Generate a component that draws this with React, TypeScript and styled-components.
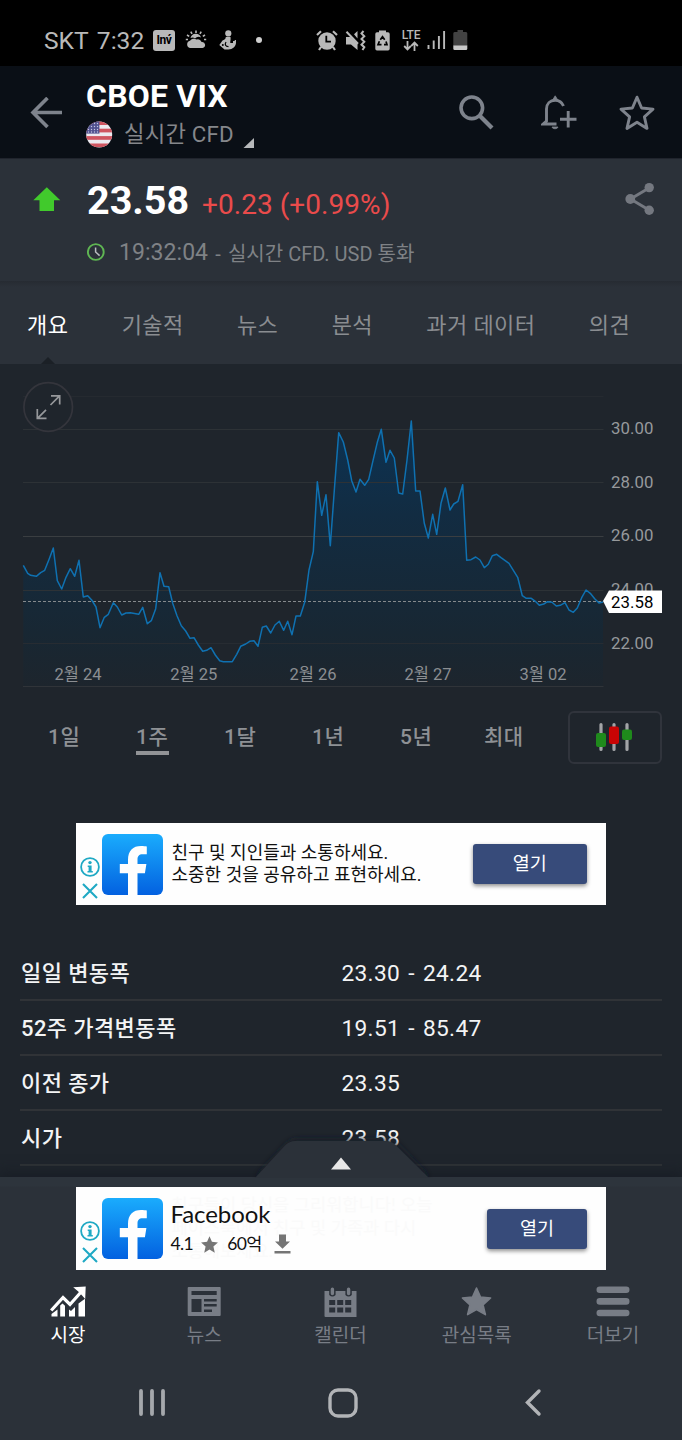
import React from 'react';
import styled, { createGlobalStyle } from 'styled-components';

const GlobalStyle = createGlobalStyle`
  * { box-sizing: border-box; }
  body {
    margin: 0;
    background: #1f252c;
    font-family: Roboto, 'Noto Sans CJK KR', sans-serif;
  }
  svg { display: block; flex: none; }
`;

const Phone = styled.div`
  width: 682px;
  height: 1440px;
  display: flex;
  flex-direction: column;
  overflow: hidden;
  background: #1f252c;
`;

/* ---------- status bar ---------- */

const StatusBar = styled.div`
  height: 66px;
  flex: none;
  display: flex;
  align-items: center;
  padding: 14px 0 0 44px;
  background: #000;
  color: #b9b9b9;
`;

const Carrier = styled.span`
  width: 109px;
  padding-top: 1px;
  font-size: 24.6px;
  line-height: 30px;
  word-spacing: 2.5px;
  white-space: nowrap;
`;

const StatusSlot = styled.span<{ $w: number; $gap?: number }>`
  width: ${(p) => p.$w}px;
  margin-left: ${(p) => p.$gap ?? 0}px;
  flex: none;
`;

const InvBadge = styled.span`
  width: 22px;
  height: 21px;
  flex: none;
  border-radius: 3px;
  background: #b9b9b9;
  color: #000;
  font: 700 12px/21px Roboto, sans-serif;
  letter-spacing: -0.4px;
  text-align: center;
`;

const Lte = styled.span`
  display: flex;
  flex-direction: column;
  align-items: center;
  width: 20px;
  margin-left: 11px;
  font: 500 12px/12px Roboto, sans-serif;
  letter-spacing: -0.2px;
`;

/* ---------- title bar ---------- */

const TitleBar = styled.header`
  height: 93px;
  flex: none;
  display: flex;
  padding-left: 30px;
  background: #0a0f16;
  border-bottom: 1px solid #20242d;
`;

const BackSlot = styled.div`
  width: 56px;
  padding-top: 31px;
`;

const TitleBlock = styled.div`
  width: 372px;
`;

const Title = styled.h1`
  margin: 11px 0 0;
  font-size: 32px;
  line-height: 38px;
  font-weight: 700;
  letter-spacing: 0.2px;
  color: #fff;
`;

const Subtitle = styled.div`
  display: flex;
  align-items: center;
  height: 27px;
  margin-top: 6px;
  font-size: 22.3px;
  line-height: 27px;
  color: #85878b;

  span { margin: 0 9px 0 11px; letter-spacing: 0.2px; white-space: nowrap; }
  svg:last-child { margin-top: 17px; }
`;

const Actions = styled.div`
  display: flex;
  gap: 45px;
  padding-top: 29px;

  svg:nth-child(1) { margin-right: 1px; }
  svg:nth-child(2) { margin-left: 1px; margin-right: -3px; }
`;

/* ---------- quote ---------- */

const Quote = styled.section`
  height: 122px;
  flex: none;
  display: flex;
  background: #2b3139;
`;

const Direction = styled.div`
  width: 87px;
  padding: 28px 0 0 33px;
`;

const QuoteBody = styled.div`
  flex: 1;
  padding-top: 19px;
`;

const PriceLine = styled.div`
  display: flex;
  align-items: baseline;
  height: 46px;
`;

const Price = styled.span`
  width: 115px;
  font-size: 39.5px;
  line-height: 46px;
  font-weight: 700;
  color: #fff;
`;

const Change = styled.span`
  font-size: 28px;
  line-height: 46px;
  letter-spacing: 0.05px;
  color: #ea4b4b;
  white-space: nowrap;
`;

const MetaLine = styled.div`
  display: flex;
  align-items: center;
  height: 30px;
  margin-top: 14px;
  color: #7f8286;
  font-size: 20px;
  line-height: 30px;
  white-space: pre;

  svg { margin-top: -2px; }
  b { margin-left: 14px; font-size: 23px; font-weight: 400; letter-spacing: 0.05px; }
  i { font-style: normal; word-spacing: 2.2px; }
  span { margin-top: 2px; }
`;

const ShareSlot = styled.div`
  width: 57px;
  padding-top: 23px;
`;

/* ---------- tabs ---------- */

const Tabs = styled.nav`
  height: 83px;
  flex: none;
  display: flex;
  padding-left: 27px;
  gap: 53.4px;
  background: linear-gradient(#262b32, #2b3139 6px);
`;

const Tab = styled.div<{ $active?: boolean }>`
  display: flex;
  flex-direction: column;
  align-items: center;
  height: 83px;
  padding-top: 5px;
  font-size: 22px;
  line-height: 80px;
  white-space: nowrap;
  color: ${(p) => (p.$active ? '#fff' : '#8a8d91')};
  letter-spacing: 0.4px;

  svg { margin-top: -9px; }
`;

/* ---------- chart ---------- */

const Main = styled.main`
  height: 813px;
  flex: none;
  overflow: hidden;
`;

const RangeRow = styled.div`
  height: 90px;
  display: flex;
  padding-left: 48px;
  margin-bottom: 42.5px;
`;

const Range = styled.div<{ $w: number; $active?: boolean }>`
  width: ${(p) => p.$w}px;
  flex: none;
  padding-top: 32px;
  font-size: 21px;
  line-height: 31px;
  font-weight: 500;
  color: #8e9195;
  letter-spacing: 0.5px;

  span {
    display: inline-block;
    height: 33px;
    padding-right: 1px;
    border-bottom: ${(p) => (p.$active ? '4px solid #919396' : '0')};
  }
`;

const ChartTypeButton = styled.div`
  width: 94px;
  height: 53px;
  margin: 20.5px 0 0;
  display: flex;
  align-items: center;
  justify-content: center;
  border: 2px solid #30343c;
  border-radius: 6px;
`;

/* ---------- ads ---------- */

const Ad = styled.div`
  width: 530px;
  height: 82.5px;
  margin: 0 auto;
  display: flex;
  background: #fefefe;
  color: #111;
`;

const AdMarks = styled.div`
  width: 26px;
  display: flex;
  flex-direction: column;
  align-items: center;
  gap: 5px;
  padding: 34px 0 0 2px;
`;

const AdLogo = styled.div`
  width: 61px;
  margin: 11px 8.5px 0 0;
`;

const AdCopy = styled.div`
  flex: 1;
  padding-top: 19px;
  font-size: 18px;
  line-height: 22.5px;
  white-space: nowrap;
`;

const AdApp = styled.div`
  flex: 1;
  position: relative;
  font-family: Lato, 'Noto Sans CJK KR', sans-serif;
  padding-top: 12px;
`;

const AppDetails = styled.div`
  position: relative;
  margin-left: -1px;
`;

const AppName = styled.div`
  font-size: 24px;
  line-height: 30px;
  letter-spacing: -0.1px;
`;

const AppStats = styled.div`
  display: flex;
  align-items: center;
  margin-top: 2px;
  height: 26px;
  font-size: 17.5px;
  line-height: 26px;
  letter-spacing: -0.6px;
  white-space: nowrap;

  svg:nth-of-type(1) { margin: 0 8px 0 7px; }
  svg:nth-of-type(2) { margin-left: 12px; }
`;

const Ghost = styled.div`
  position: absolute;
  left: 0;
  top: 6px;
  font-size: 17.6px;
  line-height: 23px;
  color: #fafafa;
  white-space: nowrap;
`;

const AdButton = styled.div<{ $w: number }>`
  width: ${(p) => p.$w}px;
  height: 40px;
  margin: 21.5px 19px 0 0;
  border-radius: 3px;
  background: #374b7a;
  box-shadow: 0 2px 4px rgba(0, 0, 0, 0.45);
  color: #fff;
  font-size: 18.5px;
  line-height: 40px;
  text-align: center;
`;

/* ---------- table ---------- */

const Table = styled.div`
  margin: 41px 20px 0;
`;

const Row = styled.div`
  height: 55px;
  display: flex;
  align-items: center;
  padding: 2px 0 0 1px;
  border-bottom: 2px solid #303337;
  color: #f3f4f5;
`;

const Label = styled.span`
  width: 320.5px;
  font-size: 22px;
  line-height: 30px;
  font-weight: 500;
  letter-spacing: 0.4px;
`;

const Value = styled.span`
  font-size: 22.7px;
  line-height: 30px;
  letter-spacing: 0.3px;
  word-spacing: 2.3px;
`;

/* ---------- dock ---------- */

const Dock = styled.div`
  position: relative;
  flex: 1;
  background: #2b3139;
  box-shadow: 0 -2px 12px 3px #191e26;
`;

const Handle = styled.div`
  position: absolute;
  left: 245px;
  bottom: 100%;
  width: 193px;
  height: 46px;
`;

const DockAd = styled.div`
  padding-top: 10px;
  background: linear-gradient(#2d343c 9px, #2b3139 10px);
`;

const BottomNav = styled.nav`
  display: flex;
  height: 80px;
  margin-top: 12.5px;
  padding-right: 1px;
`;

const NavItem = styled.div<{ $active?: boolean }>`
  flex: 1;
  display: flex;
  flex-direction: column;
  align-items: center;
  padding-top: 4px;
  color: ${(p) => (p.$active ? '#fff' : '#787d86')};
  font-size: 19px;
  line-height: 26px;

  span { margin-top: 6px; }
`;

const SystemNav = styled.div`
  display: flex;
  align-items: center;
  height: 29px;
  margin-top: 26px;
  padding-left: 138px;

  svg:nth-child(2) { margin-left: 162px; }
  svg:nth-child(3) { margin-left: 166px; }
`;

/* ---------- chart data ---------- */

// Vertices in thirds of a pixel
const SERIES: [number, number][] = [
  [70, 586], [83, 610], [92, 616], [109, 619], [122, 608], [134, 601], [148, 566], [160, 534],
  [172, 632], [185, 657], [198, 622], [211, 596], [224, 619], [237, 571], [250, 681], [263, 677],
  [275, 690], [288, 711], [300, 773], [313, 742], [325, 733], [340, 698], [352, 711], [365, 735],
  [378, 729], [391, 728], [416, 733], [428, 712], [442, 761], [454, 752], [467, 716], [480, 608],
  [492, 649], [506, 650], [518, 700], [531, 737], [544, 767], [557, 783], [570, 805], [582, 803],
  [595, 825], [608, 844], [620, 841], [633, 833], [646, 855], [659, 872], [670, 875], [697, 875],
  [710, 853], [722, 829], [737, 822], [749, 814], [762, 812], [774, 829], [787, 772], [799, 768],
  [812, 789], [825, 765], [838, 754], [851, 781], [863, 754], [876, 794], [888, 738], [901, 738],
  [914, 697], [927, 600], [940, 545], [952, 335], [965, 436], [978, 374], [991, 527], [1004, 345],
  [1016, 188], [1030, 216], [1043, 270], [1055, 332], [1068, 366], [1080, 328], [1094, 346],
  [1106, 328], [1119, 272], [1132, 217], [1144, 178], [1158, 277], [1170, 241], [1183, 264],
  [1196, 369], [1208, 372], [1221, 270], [1234, 153], [1247, 363], [1260, 363], [1273, 460],
  [1285, 504], [1298, 433], [1310, 493], [1323, 400], [1336, 354], [1350, 420], [1361, 402],
  [1374, 394], [1388, 344], [1400, 571], [1413, 569], [1427, 561], [1440, 570], [1453, 593],
  [1465, 583], [1477, 557], [1490, 553], [1503, 563], [1527, 580], [1553, 622], [1567, 677],
  [1579, 685], [1594, 685], [1606, 694], [1618, 706], [1631, 702], [1643, 695], [1656, 697],
  [1669, 708], [1681, 706], [1695, 698], [1707, 720], [1720, 727], [1732, 714], [1745, 683],
  [1758, 660], [1771, 670], [1784, 686], [1797, 699], [1809, 696],
];
const LINE = SERIES.map(([x, y]) => `${(x / 3).toFixed(1)},${(y / 3 + 6).toFixed(1)}`).join(' ');

const GRID: [number, string][] = [
  [32.5, '#252a30'], [65.5, '#2d3236'], [118.5, '#2d3236'], [172.5, '#3a3e41'],
  [226.5, '#2d3236'], [279.5, '#272c32'], [322.5, '#303439'],
];
const Y_LABELS: [number, string][] = [
  [70, '30.00'], [123.7, '28.00'], [177.3, '26.00'], [231, '24.00'], [284.7, '22.00'],
];
const X_LABELS: [number, string][] = [
  [78, '2월 24'], [193.7, '2월 25'], [313, '2월 26'], [428, '2월 27'], [543, '3월 02'],
];

function Chart() {
  return (
    <svg width="682" height="326" viewBox="0 0 682 326" fontFamily="Roboto, 'Noto Sans CJK KR', sans-serif">
      <defs>
        <linearGradient id="area" x1="0" y1="0" x2="0" y2="1">
          <stop offset="0" stopColor="#0c3354" />
          <stop offset="0.35" stopColor="#122c42" />
          <stop offset="0.8" stopColor="#182733" />
          <stop offset="1" stopColor="#1d252d" />
        </linearGradient>
      </defs>
      <polygon points={`23.3,322 ${LINE} 603,322`} fill="url(#area)" />
      {GRID.map(([y, c]) => (
        <line key={y} x1="23" x2="603.5" y1={y} y2={y} stroke={c} />
      ))}
      <line x1="23" x2="603" y1="237.5" y2="237.5" stroke="#85898c" strokeDasharray="3 2" />
      <polyline points={LINE} fill="none" stroke="#0f71b1" strokeWidth="1.5" strokeLinejoin="round" />
      <g fill="#96999c" fontSize="16.8">
        {Y_LABELS.map(([y, t]) => (
          <text key={t} x="611" y={y} textLength="42.5">{t}</text>
        ))}
      </g>
      <g fill="#8b8e92" fontSize="16.5" textAnchor="middle">
        {X_LABELS.map(([x, t]) => (
          <text key={t} x={x} y="316.3">{t}</text>
        ))}
      </g>
      <path d="M603 237 L609 226.5 H662 V249 H609 Z" fill="#fff" />
      <text x="611" y="244.3" fontSize="16.8" fill="#000" textLength="42.5">23.58</text>
      <circle cx="48.2" cy="43" r="24.3" fill="#1f252c" stroke="#34353c" strokeWidth="1.7" />
      <path d="M50.5 41 L59.3 32.2 M51 31.8 H59.7 V40.5 M46 45.8 L37.5 54.3 M37.3 45 V54.4 H46.5"
        fill="none" stroke="#96989b" strokeWidth="1.7" />
    </svg>
  );
}

/* ---------- icons ---------- */

const STAR = 'M18 2.2 L22.6 13 L34 14.1 L25.4 21.9 L28 33.4 L18 27.3 L8 33.4 L10.6 21.9 L2 14.1 L13.4 13 Z';

const UsFlag = () => (
  <svg width="27" height="27" viewBox="0 0 27 27">
    <clipPath id="disc"><circle cx="13.2" cy="13.5" r="13" /></clipPath>
    <g clipPath="url(#disc)">
      <rect width="27" height="27" fill="#eceaf0" />
      {[0, 1, 2, 3].map((i) => (
        <rect key={i} y={0.3 + i * 7.4} width="27" height="3.7" fill="#cf5560" />
      ))}
      <rect width="13.4" height="12.6" fill="#51528f" />
      {[2.5, 5.5, 8.5, 11].map((y) =>
        [2.5, 5.5, 8.5, 11.5].map((x) => <circle key={`${x}-${y}`} cx={x} cy={y} r="0.7" fill="#c5c6e2" />)
      )}
    </g>
  </svg>
);

const Facebook = ({ id }: { id: string }) => (
  <svg width="61" height="61" viewBox="0 0 61 61">
    <linearGradient id={id} x1="0" y1="0" x2="0" y2="1">
      <stop offset="0" stopColor="#1aacfd" />
      <stop offset="1" stopColor="#0361e0" />
    </linearGradient>
    <rect width="61" height="61" rx="6" fill={`url(#${id})`} />
    <path d="M26 61 V39.2 H17.8 V30 H26 V26 C26 16.6 31 12 39 12 C41.5 12 43.5 12.2 44.8 12.5 V20.3 H40.8 C36.8 20.3 35.5 22.3 35.5 25.5 V30 H44.4 L42.9 39.2 H35.5 V61 Z" fill="#fefefe" />
  </svg>
);

const Marks = () => (
  <AdMarks>
    <svg width="20" height="20" viewBox="0 0 20 20">
      <circle cx="10" cy="10" r="8.9" fill="none" stroke="#1fa9c4" strokeWidth="1.8" />
      <circle cx="10" cy="5.6" r="1.7" fill="#1fa9c4" />
      <path d="M7.7 8.4 H11.6 V14 H12.8 V15.5 H7.5 V14 H8.6 V10 H7.7 Z" fill="#1fa9c4" />
    </svg>
    <svg width="18" height="18" viewBox="0 0 18 18">
      <path d="M2 2 L16 16 M16 2 L2 16" stroke="#1fa9c4" strokeWidth="2.1" />
    </svg>
  </AdMarks>
);

function StatusIcons() {
  const c = '#b9b9b9';
  return (
    <>
      <InvBadge>Inv́</InvBadge>
      <StatusSlot $w={22} $gap={10}>
        <svg width="22" height="20" viewBox="0 0 22 20">
          <path d="M5.5 8 A5.5 5.5 0 0 1 16 7.5 A5 5 0 0 0 10 8.5 A4 4 0 0 0 5.5 8Z" fill={c} />
          <path d="M11 0.5 V3 M5.8 1.6 L7 3.8 M16.2 1.6 L15 3.8 M2 5 L4.2 6.4 M20 5 L17.8 6.4 M0.8 9.5 H3 M19 9.5 H21.2" stroke={c} strokeWidth="1.6" />
          <path d="M5 18 A3.7 3.7 0 0 1 5 10.8 A4.5 4.5 0 0 1 11.5 9.6 A4.3 4.3 0 0 1 16.6 12 A3 3 0 0 1 17.5 18Z" fill={c} />
        </svg>
      </StatusSlot>
      <StatusSlot $w={18} $gap={12}>
        <svg width="18" height="20" viewBox="0 0 18 20">
          <circle cx="9.3" cy="3.4" r="3.1" fill={c} />
          <path d="M6.8 7 H11.5 C12 10 11 11 11.3 13 H14 V11 H15.7 V10 H17 V12.5 C17 16.5 13.5 19.5 9.5 19.5 H5.5 L0.3 15 L3.5 10.6 C5 9.3 6.4 10 6.8 7Z" fill={c} />
          <path d="M7 12 C5.5 14.5 6.5 16.5 9.5 16.6" stroke="#000" strokeWidth="1.2" fill="none" />
          <circle cx="3.8" cy="15" r="1" fill="#000" />
        </svg>
      </StatusSlot>
      <StatusSlot $w={6} $gap={19}>
        <svg width="6" height="6" viewBox="0 0 6 6"><circle cx="3" cy="3" r="3" fill="#d0d0d0" /></svg>
      </StatusSlot>
      <StatusSlot $w={22} $gap={54}>
        <svg width="22" height="21" viewBox="0 0 22 21">
          <circle cx="11" cy="11" r="8.7" fill={c} />
          <path d="M1 5 L5 1.3 M21 5 L17 1.3 M5 17 L3 20 M17 17 L19 20" stroke={c} strokeWidth="2.2" />
          <path d="M10.3 5.8 V11.6 H15" stroke="#000" strokeWidth="1.8" fill="none" />
        </svg>
      </StatusSlot>
      <StatusSlot $w={21} $gap={7}>
        <svg width="21" height="21" viewBox="0 0 21 21">
          <path d="M1 7 H5.5 L12.5 13.5 V20 L6 14.5 H1Z M9 4.2 L12.5 1 V8.4 Z" fill={c} />
          <path d="M1.5 1.8 L13 13.8" stroke={c} strokeWidth="2" />
          <path d="M18.5 1 L16.5 3.4 L19.3 6.2 L16.5 9 L19.3 11.8 L16.5 14.6 L19.3 17.2 L17.5 20" stroke={c} strokeWidth="2" fill="none" />
        </svg>
      </StatusSlot>
      <StatusSlot $w={15} $gap={9}>
        <svg width="15" height="21" viewBox="0 0 15 21">
          <path d="M4 0.5 H11 V2.2 H13 Q14.7 2.2 14.7 4 V18.8 Q14.7 20.5 13 20.5 H2 Q0.3 20.5 0.3 18.8 V4 Q0.3 2.2 2 2.2 H4Z" fill={c} />
          <path d="M5.3 9.8 L7.5 6.7 L9.7 9.8 M11 11.5 L12 14.7 H9 M6.5 14.7 H3 L4.4 11.2" stroke="#000" strokeWidth="1.7" fill="none" />
        </svg>
      </StatusSlot>
      <Lte>
        LTE
        <svg width="16" height="10" viewBox="0 0 16 10">
          <path d="M4.5 0 V8 M1.2 5 L4.5 8.4 L7.8 5 M11.5 10 V2 M8.2 5 L11.5 1.6 L14.8 5" stroke={c} strokeWidth="1.8" fill="none" />
        </svg>
      </Lte>
      <StatusSlot $w={19} $gap={6}>
        <svg width="19" height="20" viewBox="0 0 19 20">
          <path d="M1.5 15 V19 M6.7 10.5 V19 M11.9 6 V19 M17.1 1 V19" stroke={c} strokeWidth="1.9" />
        </svg>
      </StatusSlot>
      <StatusSlot $w={15} $gap={7}>
        <svg width="15" height="21" viewBox="0 0 15 21">
          <path d="M4.5 0 H10 V2 H13 Q14.3 2 14.3 3.5 V16 H0.3 V3.5 Q0.3 2 1.6 2 H4.5Z" fill="#424242" />
          <path d="M0.3 15.5 H14.3 V18.5 Q14.3 20 13 20 H1.6 Q0.3 20 0.3 18.5Z" fill="#c8c8c8" />
        </svg>
      </StatusSlot>
    </>
  );
}

const NAV: { label: string; icon: React.ReactNode }[] = [
  {
    label: '시장',
    icon: (
      <svg width="36" height="31" viewBox="0 0 36 31" fill="#fff">
        <path d="M1.5 30.5 V28 L7.5 23.5 V30.5Z M10.2 30.5 V19.5 L12.5 17.5 L15 19.8 V30.5Z M19 30.5 V23.5 L21 25 L25 21 V30.5Z M28.5 30.5 V17.5 L35 12.8 V30.5Z" />
        <path d="M1.2 24.5 L13 11.5 L20 18.5 L31.5 5.5" fill="none" stroke="#fff" strokeWidth="3.2" />
        <path d="M23.2 1.2 L35.7 0.5 L35.2 13 L31.2 8.5 L28 5.2Z" />
      </svg>
    ),
  },
  {
    label: '뉴스',
    icon: (
      <svg width="34" height="31" viewBox="0 0 34 31">
        <rect x="0.7" y="1" width="33" height="29" rx="1" fill="#787d86" />
        <path d="M4.5 5 H29.7 V9 H4.5Z M4.5 13 H14.5 V26 H4.5Z M17 13 H29.7 V15.5 H17Z M17 18 H29.7 V20.5 H17Z M17 23.5 H25 V26 H17Z" fill="#2b3139" />
      </svg>
    ),
  },
  {
    label: '캘린더',
    icon: (
      <svg width="33" height="31" viewBox="0 0 33 31">
        <path d="M0.5 5 H32.5 V31 H1.5 Q0.5 31 0.5 30Z" fill="#787d86" />
        <path d="M5.2 2 V9 Q8.4 12 11.6 9 V2Z M21.4 2 V9 Q24.6 12 27.8 9 V2Z" fill="#2b3139" />
        <path d="M8.4 3.2 V7.5 M24.6 3.2 V7.5" stroke="#787d86" strokeWidth="3.4" strokeLinecap="round" />
        {[5.2, 13.2, 21.2].map((x) =>
          [14, 21.5].map((y) => <rect key={`${x}-${y}`} x={x} y={y} width="6" height="5" fill="#2b3139" />)
        )}
      </svg>
    ),
  },
  {
    label: '관심목록',
    icon: (
      <svg width="31" height="31" viewBox="0 0 31 31">
        <path d="M15.5 2 L19.5 11 L29.6 12 L22 18.8 L24.4 28.6 L15.5 23.5 L6.6 28.6 L9 18.8 L1.4 12 L11.5 11Z" fill="#787d86" stroke="#787d86" strokeWidth="1.6" strokeLinejoin="round" />
      </svg>
    ),
  },
  {
    label: '더보기',
    icon: (
      <svg width="34" height="31" viewBox="0 0 34 31" stroke="#787d86" strokeWidth="6.6" strokeLinecap="round">
        <path d="M3.8 3.8 H30.2 M3.8 15.4 H30.2 M3.8 27 H30.2" />
      </svg>
    ),
  },
];

const TABS = ['개요', '기술적', '뉴스', '분석', '과거 데이터', '의견'];

const RANGES: [string, number][] = [
  ['1일', 88], ['1주', 88], ['1달', 88], ['1년', 88], ['5년', 84], ['최대', 84],
];

const ROWS: [string, string][] = [
  ['일일 변동폭', '23.30 - 24.24'],
  ['52주 가격변동폭', '19.51 - 85.47'],
  ['이전 종가', '23.35'],
  ['시가', '23.58'],
];

export default function App() {
  return (
    <Phone>
      <GlobalStyle />
      <StatusBar>
        <Carrier>SKT 7:32</Carrier>
        <StatusIcons />
      </StatusBar>

      <TitleBar>
        <BackSlot>
          <svg width="33" height="32" viewBox="0 0 33 32">
            <path d="M32 15.5 H3 M17.5 1 L3 15.5 L17.5 30" fill="none" stroke="#7e838c" strokeWidth="3.6" />
          </svg>
        </BackSlot>
        <TitleBlock>
          <Title>CBOE VIX</Title>
          <Subtitle>
            <UsFlag />
            <span>실시간 CFD</span>
            <svg width="12" height="10" viewBox="0 0 12 10"><path d="M11 0 V10 H0.5Z" fill="#b7b9bb" /></svg>
          </Subtitle>
        </TitleBlock>
        <Actions>
          <svg width="36" height="36" viewBox="0 0 36 36" fill="none" stroke="#7e838c">
            <circle cx="13.8" cy="12.8" r="10.8" strokeWidth="3.6" />
            <path d="M21.5 20.5 L34 33" strokeWidth="4.2" />
          </svg>
          <svg width="36" height="36" viewBox="0 0 36 36" fill="none" stroke="#7e838c">
            <path d="M15.5 29 H2.2 L5.5 26 V14 C5.5 8.8 9 5.3 14.2 5.3 C18.5 5.3 21 7.5 22.5 11 M27.2 16 V32.5 M19 24.3 H35.5" strokeWidth="2.9" />
            <path d="M11.6 5 L14.2 0.8 L16.8 5Z M11 32 H17 C16.5 34.3 11.5 34.3 11 32Z" fill="#7e838c" strokeWidth="0.8" />
          </svg>
          <svg width="36" height="36" viewBox="0 0 36 36">
            <path d={STAR} fill="none" stroke="#7e838c" strokeWidth="2.9" strokeLinejoin="round" />
          </svg>
        </Actions>
      </TitleBar>

      <Quote>
        <Direction>
          <svg width="28" height="25" viewBox="0 0 28 25">
            <path d="M13.8 0.3 L27.3 13.3 H21 V24 H6.5 V13.3 H0.3Z" fill="#41ca2c" />
          </svg>
        </Direction>
        <QuoteBody>
          <PriceLine>
            <Price>23.58</Price>
            <Change>+0.23 (+0.99%)</Change>
          </PriceLine>
          <MetaLine>
            <svg width="18" height="18" viewBox="0 0 18 18" fill="none">
              <circle cx="8.8" cy="9" r="7.9" stroke="#5fb653" strokeWidth="1.9" />
              <path d="M8.6 4.6 V9 L12.6 12.6" stroke="#b9bcc0" strokeWidth="1.5" />
            </svg>
            <b>19:32:04</b>
            <span><i> - </i>실시간 CFD. USD 통화</span>
          </MetaLine>
        </QuoteBody>
        <ShareSlot>
          <svg width="30" height="34" viewBox="0 0 30 34" fill="#747880">
            <path d="M5.5 17 L24 6 M5.5 17 L24 28" stroke="#747880" strokeWidth="3" />
            <circle cx="5.3" cy="17" r="4.9" />
            <circle cx="24.2" cy="5.6" r="4.7" />
            <circle cx="24.2" cy="28.2" r="4.7" />
          </svg>
        </ShareSlot>
      </Quote>

      <Tabs>
        {TABS.map((t, i) => (
          <Tab key={t} $active={i === 0}>
            {t}
            {i === 0 && (
              <svg width="14" height="7" viewBox="0 0 14 7"><path d="M7 0 L14 7 H0Z" fill="#1b2026" /></svg>
            )}
          </Tab>
        ))}
      </Tabs>

      <Main>
        <Chart />
        <RangeRow>
          {RANGES.map(([label, w], i) => (
            <Range key={label} $w={w} $active={i === 1}><span>{label}</span></Range>
          ))}
          <ChartTypeButton>
            <svg width="40" height="30" viewBox="0 0 40 30">
              <path d="M6 2.5 V27.5 M19 2.5 V27.5 M32 2.5 V27.5" stroke="#a2a4a7" strokeWidth="3.2" strokeLinecap="round" />
              <rect x="1" y="11" width="10" height="14" rx="2" fill="#1f8a1c" />
              <rect x="14" y="4.5" width="10" height="17.5" rx="2" fill="#c90404" />
              <rect x="27" y="7.5" width="10" height="10.5" rx="2" fill="#1f8a1c" />
            </svg>
          </ChartTypeButton>
        </RangeRow>

        <Ad>
          <Marks />
          <AdLogo><Facebook id="fb1" /></AdLogo>
          <AdCopy>
            친구 및 지인들과 소통하세요.
            <br />
            소중한 것을 공유하고 표현하세요.
          </AdCopy>
          <AdButton $w={114.5}>열기</AdButton>
        </Ad>

        <Table>
          {ROWS.map(([label, value]) => (
            <Row key={label}>
              <Label>{label}</Label>
              <Value>{value}</Value>
            </Row>
          ))}
        </Table>
      </Main>

      <Dock>
        <Handle>
          <svg width="193" height="47" viewBox="0 0 193 47">
            <defs>
              <filter id="soft" x="-20%" y="-40%" width="140%" height="180%"><feGaussianBlur stdDeviation="3.5" /></filter>
            </defs>
            <path d="M12 46 L42 14 Q47 9 54 9 H140 Q147 9 152 14 L183 46Z" fill="#191e26" filter="url(#soft)" />
            <path d="M10 47 L40 14.5 Q44.5 10 50 10 H141 Q147 10 151 14.5 L184 47Z" fill="#2b3139" />
            <path d="M96 26.5 L106 38.5 H86Z" fill="#e8e8e8" />
          </svg>
        </Handle>
        <DockAd>
          <Ad>
            <Marks />
            <AdLogo><Facebook id="fb2" /></AdLogo>
            <AdApp>
              <Ghost>
                친구들이 당신을 그리워합니다! 오늘
                <br />
                페이스북에서 친구 및 가족과 다시
                <br />
                소통해보세요.
              </Ghost>
              <AppDetails>
                <AppName>Facebook</AppName>
                <AppStats>
                  4.1
                  <svg width="19" height="19" viewBox="0 0 36 36"><path d={STAR} fill="#757575" /></svg>
                  60억
                  <svg width="17" height="20" viewBox="0 0 17 20">
                    <path d="M5 0.5 H12 V7.5 H16 L8.5 14.8 L1 7.5 H5Z M0.5 17 H16.5 V19.5 H0.5Z" fill="#757575" />
                  </svg>
                </AppStats>
              </AppDetails>
            </AdApp>
            <AdButton $w={100}>열기</AdButton>
          </Ad>
        </DockAd>
        <BottomNav>
          {NAV.map(({ label, icon }, i) => (
            <NavItem key={label} $active={i === 0}>
              {icon}
              <span>{label}</span>
            </NavItem>
          ))}
        </BottomNav>
        <SystemNav>
          <svg width="28" height="29" viewBox="0 0 28 29">
            <path d="M3 3 V26 M14 3 V26 M25 3 V26" stroke="#a5a8ac" strokeWidth="3.8" strokeLinecap="round" />
          </svg>
          <svg width="30" height="30" viewBox="0 0 30 30">
            <rect x="2" y="2" width="26" height="26" rx="8" fill="none" stroke="#b2b4b7" strokeWidth="3.4" />
          </svg>
          <svg width="18" height="29" viewBox="0 0 18 29">
            <path d="M15 3 L3.5 14.5 L15 26" fill="none" stroke="#b2b4b7" strokeWidth="3.4" strokeLinecap="round" />
          </svg>
        </SystemNav>
      </Dock>
    </Phone>
  );
}
